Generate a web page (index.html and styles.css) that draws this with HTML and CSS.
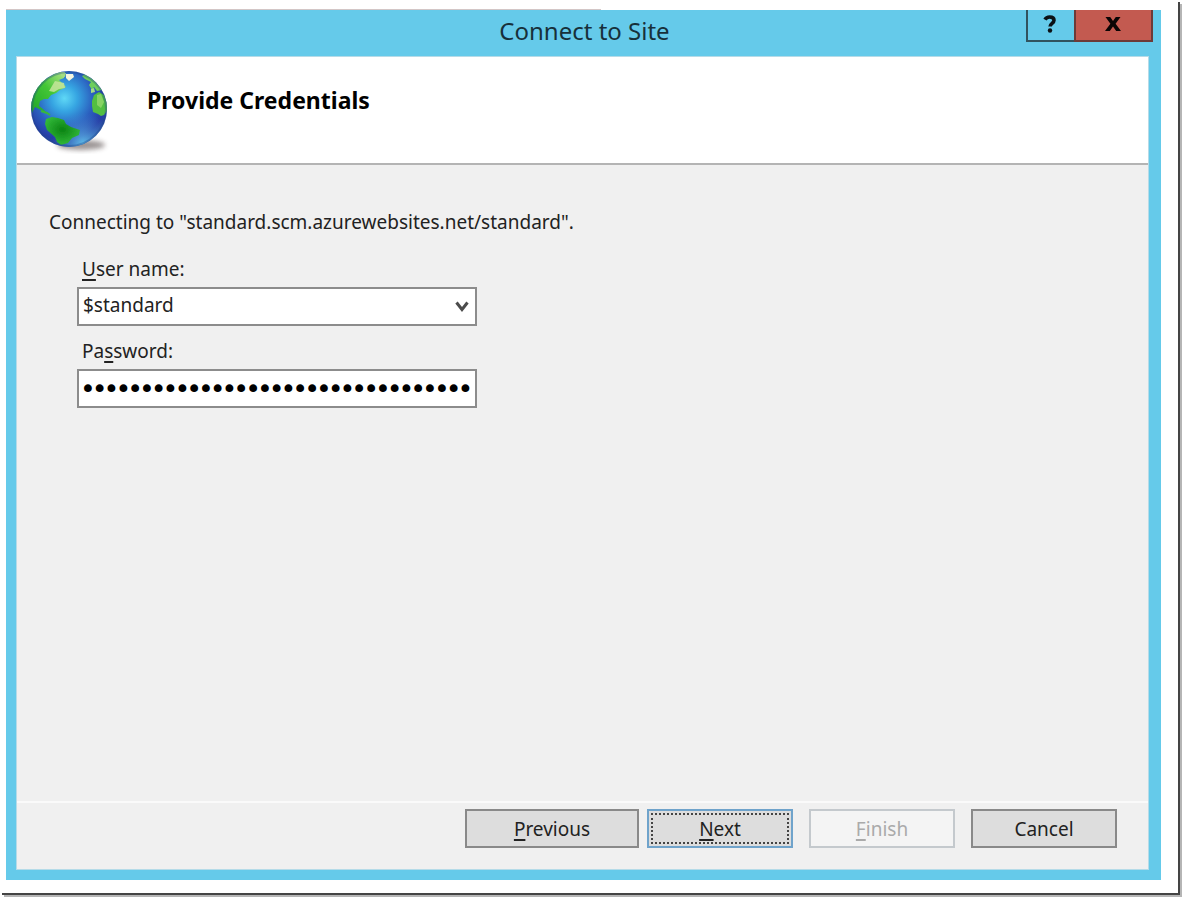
FILE: index.html
```html
<!DOCTYPE html>
<html lang="en">
<head>
<meta charset="utf-8">
<title>Connect to Site</title>
<link rel="stylesheet" href="styles.css">
</head>
<body>
<div class="sheet">
  <main class="dialog">
    <header class="titlebar">
      <h1 class="title">Connect to Site</h1>
      <div class="window-buttons">
        <button class="window-button help" type="button" aria-label="Help">
          <svg width="14" height="18" viewBox="0 0 14 18" aria-hidden="true"><path d="M2 4.600C3 2.600 4.800 2 6.700 2c2.800 0 4.300 1.300 4.300 3.300 0 3-3.900 3-3.900 6.300" fill="none" stroke="#0b1115" stroke-width="3.600"/><circle cx="7" cy="15.500" r="2.200" fill="#0b1115"/></svg>
        </button>
        <button class="window-button close" type="button" aria-label="Close">
          <svg width="16" height="14" viewBox="0 0 16 14" aria-hidden="true"><path d="M0.500 0H5.200L8 4 10.800 0H15.500L10.600 6.700 16 14H11.200L8 9.600 4.800 14H0L5.400 6.700Z" fill="#0b0505"/></svg>
        </button>
      </div>
    </header>
    <form class="panel">
      <div class="banner">
        <svg class="globe" width="84" height="84" viewBox="0 0 84 84" aria-hidden="true">
          <defs>
            <radialGradient id="sea" cx="0.44" cy="0.36" r="0.68">
              <stop offset="0" stop-color="#5fd8f6"/>
              <stop offset="0.250" stop-color="#36a5e2"/>
              <stop offset="0.550" stop-color="#2b60bf"/>
              <stop offset="0.800" stop-color="#263da5"/>
              <stop offset="1" stop-color="#2b549f"/>
            </radialGradient>
            <radialGradient id="glow" cx="0.68" cy="0.95" r="0.4">
              <stop offset="0" stop-color="#62c3ee" stop-opacity="0.900"/>
              <stop offset="1" stop-color="#4a90d6" stop-opacity="0"/>
            </radialGradient>
            <linearGradient id="north" x1="0" y1="1" x2="1" y2="0">
              <stop offset="0" stop-color="#1fa329"/>
              <stop offset="0.550" stop-color="#43c636"/>
              <stop offset="1" stop-color="#b9e58b"/>
            </linearGradient>
            <radialGradient id="south" cx="0.500" cy="0.450" r="0.6">
              <stop offset="0" stop-color="#0b8313"/>
              <stop offset="1" stop-color="#35bd3d"/>
            </radialGradient>
            <filter id="soft" x="-20%" y="-60%" width="140%" height="220%"><feGaussianBlur stdDeviation="2.500"/></filter>
            <filter id="edge"><feGaussianBlur stdDeviation="0.700"/></filter>
            <clipPath id="disc"><circle cx="39" cy="39" r="38"/></clipPath>
          </defs>
          <ellipse cx="51" cy="75" rx="24" ry="5" fill="#4a3c3c" opacity="0.550" filter="url(#soft)"/>
          <circle cx="39" cy="39" r="38" fill="url(#sea)"/>
          <circle cx="39" cy="39" r="38" fill="url(#glow)"/>
          <g clip-path="url(#disc)" filter="url(#edge)">
            <path d="M27 2L35 2 34 8 29 10 33 14 36 17 30 20 26 23 21 25 18 29 14 29 10 31 9 36 13 39 16 42 11 40 5 37 2 43 0 30 8 14Z" fill="url(#north)"/>
            <path d="M25 11L34 13 35 18 29 19 24 22 19 21Z" fill="#c5e59a" opacity="0.850"/>
            <path d="M36 4L43 4 44 7 39 11 36 8Z" fill="#f4f5df"/>
            <path d="M31 3L36 3 35 7 31 6Z" fill="#a4dd83"/>
            <path d="M55 4L65 11 72 20 67 21 64 17 62 20 59 15 61 12 55 9 52 6Z" fill="#6dcf5b"/>
            <path d="M61 19L64 18 65 22 61 23Z" fill="#a5dc86"/>
            <path d="M64 25L69 22 74 25 79 38 74 45 71 46 68 44 63 42 62 36 62 31Z" fill="#52bf42"/>
            <path d="M67 25L71 24 74 32 71 38 67 35Z" fill="#9edc72" opacity="0.700"/>
            <path d="M11 41L17 43 20 45" fill="none" stroke="#38b83c" stroke-width="2"/>
            <path d="M16 49L22 47 28 48 34 50 36 54 41 57 50 60 49 65 42 68 38 73 31 75 27 72 25 67 17 60 15 54Z" fill="url(#south)"/>
          </g>
          <circle cx="39" cy="39" r="37" fill="none" stroke="#1f4588" stroke-width="2" opacity="0.350"/>
        </svg>
        <h2 class="heading">Provide Credentials</h2>
      </div>
      <div class="fields">
        <p class="status">Connecting to "standard.scm.azurewebsites.net/standard".</p>
        <div class="field">
          <label class="label" for="user"><u>U</u>ser name:</label>
          <div class="combo">
            <select class="box user" id="user"><option>$standard</option></select>
            <svg class="chevron" width="14" height="12" viewBox="0 0 14 12" aria-hidden="true"><path d="M1.500 1.500L7 8.500 12.500 1.500" fill="none" stroke="#4c4c4c" stroke-width="3"/></svg>
          </div>
        </div>
        <div class="field">
          <label class="label" for="password">Pa<u>s</u>sword:</label>
          <input class="box password" id="password" type="password" value="012345678901234567890123456789012">
        </div>
      </div>
      <footer class="actions">
        <button class="button wide" type="button"><span><u>P</u>revious</span></button>
        <button class="button default" type="submit"><span><u>N</u>ext</span></button>
        <button class="button" type="button" disabled><span><u>F</u>inish</span></button>
        <button class="button" type="button">Cancel</button>
      </footer>
    </form>
  </main>
</div>
</body>
</html>
```
FILE: styles.css
```css
* {
  box-sizing: border-box;
}

body {
  display: flex;
  min-height: 100vh;
  margin: 0;
  padding: 2px;
  background: #fff;
  color: #222;
  font: 19px/24px "Noto Sans", "Open Sans", sans-serif;
}

.sheet {
  display: flex;
  flex: 1;
  padding: 8px 17px 13px 4px;
  border: solid #444;
  border-width: 0 2px 2px 0;
  background: linear-gradient(#d3c6c6, #d3c6c6) 4px 7px / 595px 1px no-repeat;
  box-shadow: 2px 2px 0 #b5b5b5;
}

.dialog {
  display: flex;
  flex: 1;
  flex-direction: column;
  padding: 0 12px 10px 10px;
  background: #65caea;
}

.titlebar {
  display: grid;
  grid-template-columns: 1fr auto 1fr;
  height: 46px;
  margin-right: -4px;
}

.title {
  grid-column: 2;
  margin: 0;
  color: #17303a;
  font-size: 24px;
  font-weight: 400;
  line-height: 42px;
}

.window-buttons {
  display: flex;
  justify-self: end;
  height: 32px;
}

.window-button {
  display: flex;
  align-items: center;
  justify-content: center;
  padding: 0 2px 2px 0;
  border: solid #31535f;
  border-width: 0 0 2px 2px;
}

.help {
  width: 48px;
  background: #65caea;
}

.close {
  width: 79px;
  border-color: #6d3a38;
  border-right-width: 2px;
  background: #c35a50;
}

.panel {
  display: flex;
  flex: 1;
  flex-direction: column;
  border: 1px solid #b5dbe8;
  background: #f0f0f0;
}

.banner {
  display: flex;
  gap: 33px;
  padding: 13px 13px 9px;
  border-bottom: 2px solid #b4b4b4;
  background: #fff;
}

.heading {
  margin: 18px 0 0;
  color: #000;
  font-size: 23px;
  font-weight: 700;
  line-height: 24px;
}

.fields {
  flex: 1;
  padding: 45px 32px 0;
}

.status {
  margin: 0 0 23px;
}

.field {
  width: 400px;
  max-width: 100%;
  margin: 0 0 13px 28px;
}

.label {
  display: block;
  margin-bottom: 6px;
  padding-left: 5px;
}

u {
  text-decoration-thickness: 2px;
  text-underline-offset: 3px;
}

.combo {
  display: grid;
  align-items: center;
}

.box {
  width: 100%;
  height: 39px;
  padding: 0 4px;
  border: 2px solid #8c8c8c;
  border-radius: 0;
  background: #fff;
  color: #222;
  font: inherit;
  appearance: none;
}

.combo .box,
.chevron {
  grid-area: 1 / 1;
}

.user {
  padding-bottom: 4px;
}

.chevron {
  justify-self: end;
  margin-right: 8px;
  pointer-events: none;
}

.password {
  padding: 0 0 2px 3px;
  color: #000;
  font-family: "DejaVu Sans", sans-serif;
  font-size: 20px;
  -webkit-text-stroke: 2px #000;
}

.actions {
  display: flex;
  justify-content: flex-end;
  gap: 16px;
  padding: 6px 31px 21px;
  border-top: 2px solid #fafafa;
}

.button {
  width: 146px;
  height: 39px;
  padding: 0;
  border: 2px solid #898989;
  background: #ddd;
  color: #222;
  font: inherit;
}

.wide {
  width: 174px;
  margin-right: -8px;
}

.default {
  border-color: #6fa3cb;
  outline: 2px dotted #444;
  outline-offset: -6px;
}

.button:disabled {
  border-color: #c4c9cd;
  background: #f4f4f4;
  color: #aaa;
}
```
